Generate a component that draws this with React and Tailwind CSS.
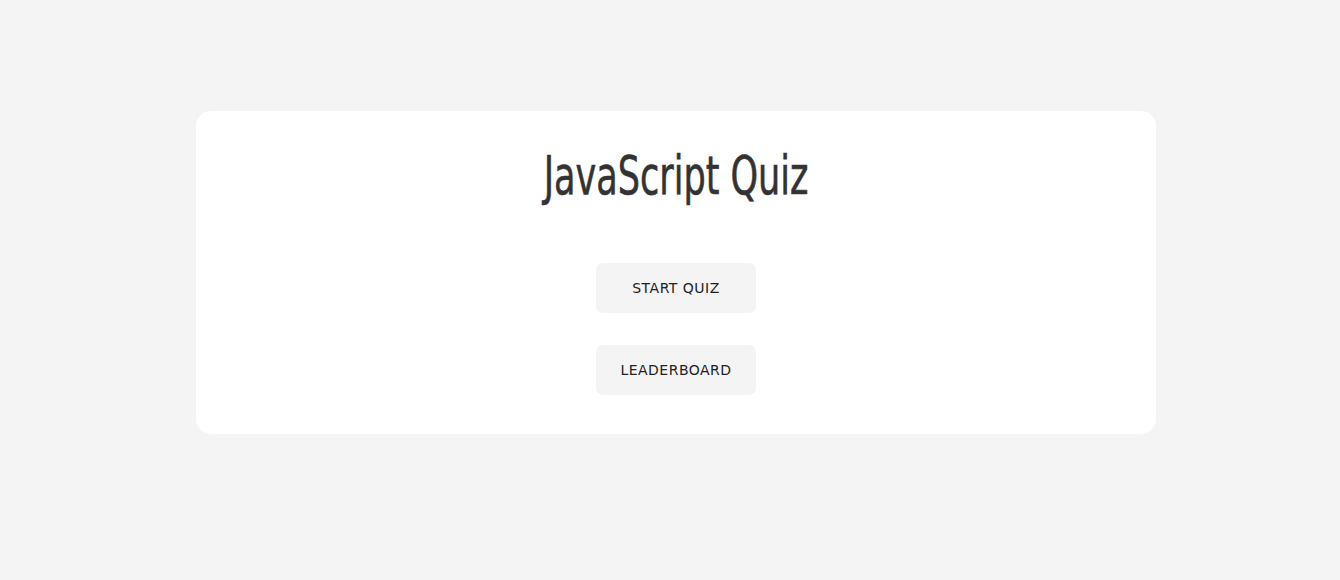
import React from "react";

function MenuButton({ children }) {
  return (
    <button
      type="button"
      className="h-[50px] w-[160px] rounded-[7px] bg-[#f4f4f4] text-[14px] uppercase tracking-[0.035em] text-[#222] [font-family:'DejaVu_Sans','Open_Sans',sans-serif]"
    >
      {children}
    </button>
  );
}

export default function App() {
  return (
    <div className="flex min-h-[580px] justify-center bg-[#f4f4f4] pl-[12px] pt-[111px]">
      <div className="flex h-fit w-[960px] flex-col items-center rounded-[15px] bg-white pb-[39px]">
        <h1 className="mt-[23px] h-[84px] origin-center scale-x-[0.735] text-[53px] leading-[84px] text-[#333] [-webkit-text-stroke:0.6px_#333] [font-family:'DejaVu_Sans_Condensed','Liberation_Sans_Narrow','DejaVu_Sans',sans-serif]">
          JavaScript Quiz
        </h1>
        <div className="mt-[45px] flex flex-col gap-[32px]">
          <MenuButton>Start Quiz</MenuButton>
          <MenuButton>Leaderboard</MenuButton>
        </div>
      </div>
    </div>
  );
}
